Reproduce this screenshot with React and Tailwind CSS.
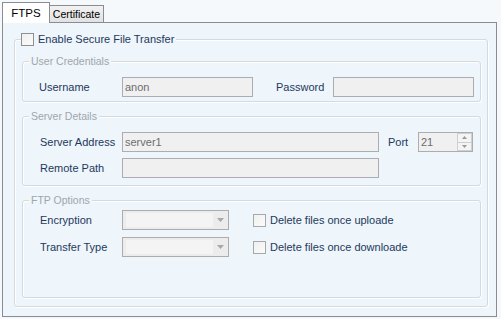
import React from "react";

const labelCls = "text-[#1e395b] text-[11px]";
const groupBorder =
  "border border-[#d3dbe1] rounded-[3px] shadow-[inset_1px_1px_0_#ffffff,1px_1px_0_#ffffff]";

function Group({ title, className = "", children }) {
  return (
    <fieldset className={`${groupBorder} ml-[7px] w-[459px] ${className}`}>
      <legend className="ml-[6px] px-[2px] h-[13px] leading-[13px] text-[10.5px] text-[#a0a6ac] bg-[#eef5fb]">
        {title}
      </legend>
      {children}
    </fieldset>
  );
}

function Input({ w, value }) {
  return (
    <div
      className={`${w} h-[20px] border border-[#abadb3] bg-[#f0f0f0] pl-[2px] leading-[18px] text-[#6d6d6d] text-[11px]`}
    >
      {value}
    </div>
  );
}

function Select() {
  return (
    <div className="w-[107px] h-[20px] border border-[#acacac] bg-[#ececec] flex items-stretch">
      <div className="flex-1 my-[2px] ml-[3px] bg-[#f4f4f4]" />
      <div className="w-[15px] flex items-center justify-center">
        <svg width="7" height="4" viewBox="0 0 7 4">
          <path d="M0 0 H7 L3.5 4 Z" fill="#a8a8a8" />
        </svg>
      </div>
    </div>
  );
}

function Check({ border = "border-[#a7a8a9]" }) {
  return (
    <div
      className={`w-[13px] h-[13px] border ${border} bg-gradient-to-br from-[#f0f0f0] to-[#fbfbfb] shrink-0`}
    />
  );
}

export default function App() {
  return (
    <div className="w-[501px] h-[319px] bg-[#f5f9fc] pt-[2px] pl-[2px] font-['Liberation_Sans',Arial,sans-serif] text-[11px]">
      <div className="flex items-start h-[20px]">
        <div className="relative z-10 w-[48px] h-[21px] border border-b-0 border-[#898c95] bg-white text-[11.5px] text-black flex justify-center pt-[4px] leading-[13px]">
          FTPS
        </div>
        <div className="mt-[3px] w-[54px] h-[17px] border border-l-0 border-b-0 border-[#898c95] bg-gradient-to-b from-[#f2f2f2] to-[#e2e2e2] text-black text-[10.5px] flex justify-center items-center leading-[13px]">
          Certificate
        </div>
      </div>
      <div className="w-[495px] h-[295px] border border-[#898c95] bg-[#eef5fb] pt-[9px] pl-[11px]">
        <fieldset className={`${groupBorder} w-[474px]`}>
          <legend className="ml-[6px] pr-[2px] h-[14px] flex items-center gap-[4px] bg-[#eef5fb]">
            <Check border="border-[#8f8f8f]" />
            <span className={`${labelCls} leading-[14px]`}>Enable Secure File Transfer</span>
          </legend>
          <div className="pt-[9px] pb-[8px]">
            <Group title="User Credentials">
              <div className="pt-[9px] pb-[4px] flex items-center">
                <div className={`w-[99px] pl-[16px] ${labelCls}`}>Username</div>
                <Input w="w-[131px]" value="anon" />
                <div className={`ml-[23px] w-[57px] ${labelCls}`}>Password</div>
                <Input w="w-[141px]" value="" />
              </div>
            </Group>
            <Group title="Server Details" className="mt-[8px]">
              <div className="pt-[9px] pb-[7px] flex flex-col gap-[6px]">
                <div className="flex items-center">
                  <div className={`w-[99px] pl-[17px] ${labelCls} whitespace-nowrap`}>Server Address</div>
                  <Input w="w-[257px]" value="server1" />
                  <div className={`ml-[9px] w-[30px] ${labelCls}`}>Port</div>
                  <div className="w-[55px] h-[20px] border border-[#abadb3] bg-[#f0f0f0] flex">
                    <div className="flex-1 pl-[2px] leading-[18px] text-[#6d6d6d] text-[11px]">21</div>
                    <div className="w-[15px] flex flex-col">
                      <div className="flex-1 border border-[#cfcfcf] bg-[#f4f4f4] flex items-center justify-center">
                        <svg width="5" height="3" viewBox="0 0 5 3">
                          <path d="M0 3 H5 L2.5 0 Z" fill="#9a9a9a" />
                        </svg>
                      </div>
                      <div className="flex-1 border border-t-0 border-[#cfcfcf] bg-[#f4f4f4] flex items-center justify-center">
                        <svg width="5" height="3" viewBox="0 0 5 3">
                          <path d="M0 0 H5 L2.5 3 Z" fill="#9a9a9a" />
                        </svg>
                      </div>
                    </div>
                  </div>
                </div>
                <div className="flex items-center">
                  <div className={`w-[99px] pl-[17px] ${labelCls}`}>Remote Path</div>
                  <Input w="w-[257px]" value="" />
                </div>
              </div>
            </Group>
            <Group title="FTP Options" className="mt-[8px]">
              <div className="pt-[3px] pb-[40px] flex flex-col gap-[7px]">
                <div className="flex items-center">
                  <div className={`w-[99px] pl-[17px] ${labelCls}`}>Encryption</div>
                  <Select />
                  <div className="ml-[24px] flex items-center gap-[4px]">
                    <Check />
                    <span className={labelCls}>Delete files once uploade</span>
                  </div>
                </div>
                <div className="flex items-center">
                  <div className={`w-[99px] pl-[17px] ${labelCls}`}>Transfer Type</div>
                  <Select />
                  <div className="ml-[24px] flex items-center gap-[4px]">
                    <Check />
                    <span className={labelCls}>Delete files once downloade</span>
                  </div>
                </div>
              </div>
            </Group>
          </div>
        </fieldset>
      </div>
    </div>
  );
}
